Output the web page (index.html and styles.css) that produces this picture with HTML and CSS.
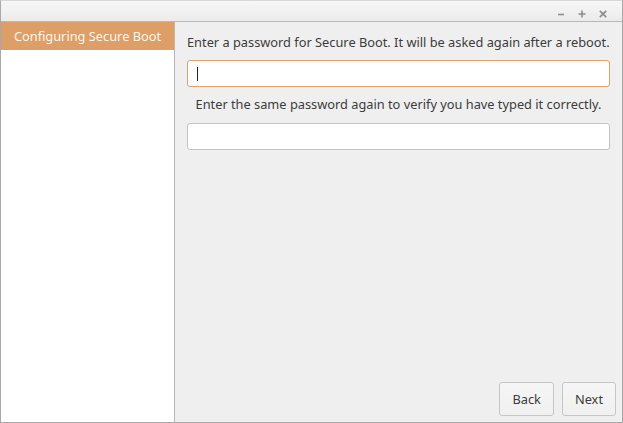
FILE: index.html
```html
<!DOCTYPE html>
<html lang="en">
<head>
    <meta charset="UTF-8">
    <title>Secure Boot</title>
    <link rel="stylesheet" href="styles.css">
</head>
<body>
    <div class="window">
        <div class="titlebar">
            <svg class="tb-btn" width="10" height="10" viewBox="0 0 10 10"><path d="M2 5.5h6" stroke="#8c8c8c" stroke-width="1.6"/></svg>
            <svg class="tb-btn" width="10" height="10" viewBox="0 0 10 10"><path d="M1.5 5h7M5 1.5v7" stroke="#8c8c8c" stroke-width="1.6"/></svg>
            <svg class="tb-btn" width="10" height="10" viewBox="0 0 10 10"><path d="M1.8 1.8l6.4 6.4M8.2 1.8l-6.4 6.4" stroke="#8c8c8c" stroke-width="1.7"/></svg>
        </div>
        <div class="main">
            <div class="sidebar">
                <div class="step active">Configuring Secure Boot</div>
            </div>
            <div class="content">
                <p class="label">Enter a password for Secure Boot. It will be asked again after a reboot.</p>
                <div class="field focused"><span class="caret"></span></div>
                <p class="label center">Enter the same password again to verify you have typed it correctly.</p>
                <div class="field"></div>
                <div class="buttons">
                    <button class="btn">Back</button>
                    <button class="btn">Next</button>
                </div>
            </div>
        </div>
    </div>
</body>
</html>
```

FILE: styles.css
```css
body {
    margin: 0;
    font-family: "Noto Sans", "Open Sans", sans-serif;
    font-size: 12.8px;
    color: #3c3c3c;
}
.window {
    height: 423px;
    box-sizing: border-box;
    display: flex;
    flex-direction: column;
    border-left: 1px solid #a9a9a9;
    border-right: 1px solid #a9a9a9;
    border-bottom: 1px solid #a9a9a9;
    border-top: 1px solid #d8d8d8;
}
.titlebar {
    height: 20px;
    background: linear-gradient(#f7f7f7, #ebebeb);
    display: flex;
    justify-content: flex-end;
    align-items: center;
    gap: 11px;
    padding: 0 14px 0 0;
}
.tb-btn {
    display: block;
    margin-top: 6px;
}
.main {
    flex: 1;
    display: flex;
    border-top: 1px solid #b8b8b8;
}
.sidebar {
    width: 173px;
    background: #fff;
    border-right: 1px solid #b8b8b8;
}
.step {
    height: 28px;
    line-height: 28px;
    text-align: center;
}
.step.active {
    background: #dd9e67;
    color: #fdf6ef;
}
.content {
    flex: 1;
    background: #efefef;
    display: flex;
    flex-direction: column;
    padding: 12px 12px 6px 12px;
}
.label {
    margin: 0 0 9px 0;
    line-height: 17px;
}
.label.center {
    text-align: center;
    margin-top: 9px;
    margin-bottom: 10px;
}
.field {
    height: 27px;
    box-sizing: border-box;
    background: #fff;
    border: 1px solid #c3c3c3;
    border-radius: 3px;
    padding: 6px 9px;
}
.field.focused {
    border-color: #e0a26c;
}
.caret {
    display: block;
    width: 1px;
    height: 14px;
    background: #222;
}
.buttons {
    margin-top: auto;
    margin-right: -6px;
    display: flex;
    justify-content: flex-end;
    gap: 8px;
}
.btn {
    height: 34px;
    padding: 0 12px;
    font: inherit;
    color: #3c3c3c;
    background: linear-gradient(#f6f6f6, #f0f0f0);
    border: 1px solid #c6c6c6;
    border-radius: 3px;
}
```
